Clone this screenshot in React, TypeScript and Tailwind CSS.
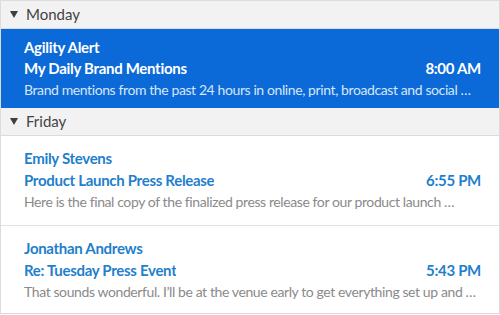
import React from 'react';

interface Message {
  sender: string;
  subject: string;
  time: string;
  preview: string;
  selected?: boolean;
}

interface Group {
  day: string;
  messages: Message[];
}

const groups: Group[] = [
  {
    day: 'Monday',
    messages: [
      {
        sender: 'Agility Alert',
        subject: 'My Daily Brand Mentions',
        time: '8:00 AM',
        preview:
          'Brand mentions from the past 24 hours in online, print, broadcast and social \u2026',
        selected: true,
      },
    ],
  },
  {
    day: 'Friday',
    messages: [
      {
        sender: 'Emily Stevens',
        subject: 'Product Launch Press Release',
        time: '6:55 PM',
        preview:
          'Here is the final copy of the finalized press release for our product launch \u2026',
      },
      {
        sender: 'Jonathan Andrews',
        subject: 'Re: Tuesday Press Event',
        time: '5:43 PM',
        preview:
          'That sounds wonderful. I\u2019ll be at the venue early to get everything set up and \u2026',
      },
    ],
  },
];

const Caret = () => (
  <svg width="8" height="7" viewBox="0 0 8 7" className="shrink-0">
    <path d="M0 0h8L4 7z" fill="#3f3f3f" />
  </svg>
);

const MessageRow: React.FC<{ message: Message }> = ({ message }) => {
  const { selected } = message;
  return (
    <div
      className={`pl-[23px] pr-[18px] ${
        selected
          ? 'bg-[#0b6ad8] pt-[8px] pb-[8px] leading-[21px] text-white'
          : 'border-b border-[#e2e2e2] bg-white pt-[11px] pb-[12px] leading-[22px] text-[#1f7fcc] last:border-b-0 last:pb-[10px]'
      }`}
    >
      <div className="truncate font-bold tracking-[-0.3px]">{message.sender}</div>
      <div className="flex justify-between font-bold tracking-[-0.3px]">
        <span className="truncate">{message.subject}</span>
        <span className="ml-4 shrink-0">{message.time}</span>
      </div>
      <div
        className={`truncate text-[14px] tracking-[-0.4px] ${
          selected ? 'text-[#d6e6fb]' : 'text-[#8a8a8a]'
        }`}
      >
        {message.preview}
      </div>
    </div>
  );
};

export default function App() {
  return (
    <div
      className="h-[315px] w-[500px] overflow-hidden bg-white text-[15px]"
      style={{ fontFamily: 'Lato, "Open Sans", sans-serif' }}
    >
      <div className="border border-[#dcdcdc]">
        {groups.map((group) => (
          <div key={group.day}>
            <div className="flex h-[28px] items-center gap-[8px] border-b border-[#d5dce6] bg-[#f2f2f2] pl-[9px] text-[#444444]">
              <Caret />
              <span>{group.day}</span>
            </div>
            {group.messages.map((m) => (
              <MessageRow key={m.subject} message={m} />
            ))}
          </div>
        ))}
      </div>
    </div>
  );
}
